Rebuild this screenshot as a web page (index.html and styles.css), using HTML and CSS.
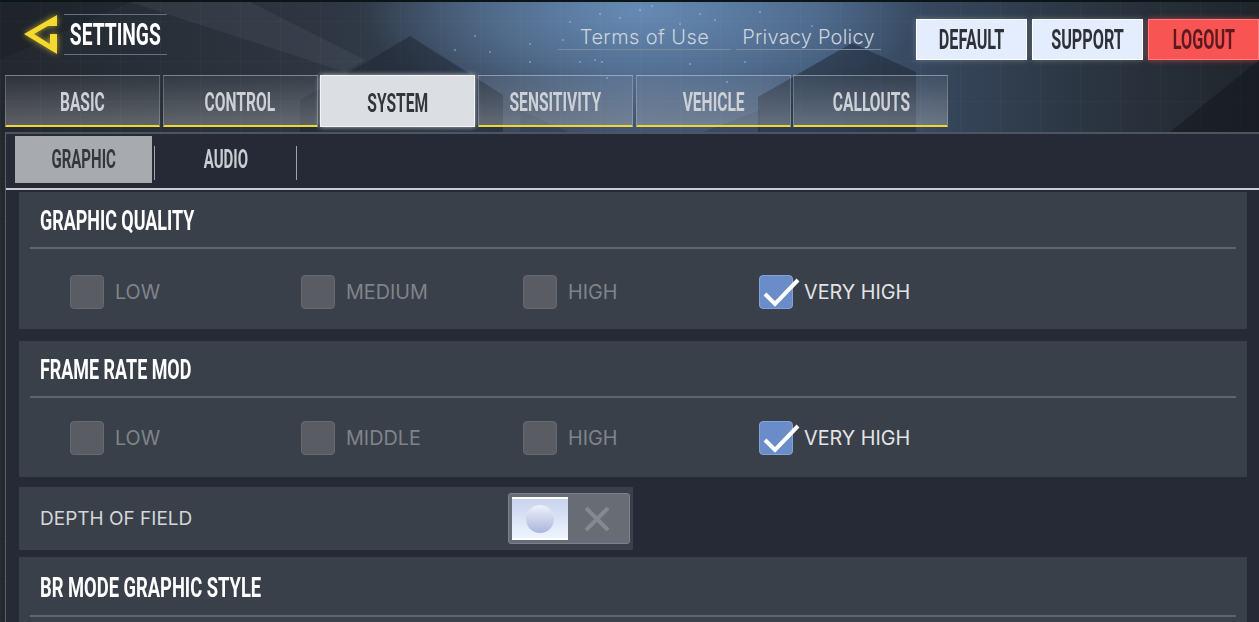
FILE: index.html
```html
<!DOCTYPE html>
<html lang="en">
<head>
  <meta charset="UTF-8" />
  <title>Settings</title>
  <link rel="stylesheet" href="styles.css">
</head>
<body>
  <svg class="backdrop" width="1259" height="622" viewBox="0 0 1259 622">
    <polygon points="130,2 250,2 365,60 345,72" fill="#a4b2c4" opacity="0.08"/>
    <polygon points="0,60 130,2 0,2" fill="#0e1218" opacity="0.2"/>
    <polygon points="350,72 410,36 503,95 503,132 300,132 300,100" fill="#1c2430" opacity="0.5"/>
    <polygon points="758,97 852,43 916,72 916,132 758,132" fill="#1c2430" opacity="0.5"/>
    <polygon points="520,110 630,160 760,110 760,132 520,132" fill="#1c2430" opacity="0.22"/>
    <polygon points="1170,132 1259,60 1259,132" fill="#11151c" opacity="0.5"/>
    <g fill="#c5d6ea" opacity="0.45">
      <circle cx="563" cy="40" r="1"/><circle cx="530" cy="44" r="1"/><circle cx="595" cy="60" r="1"/>
      <circle cx="602" cy="62" r="1"/><circle cx="580" cy="62" r="1"/><circle cx="640" cy="10" r="1"/>
      <circle cx="652" cy="6" r="1"/><circle cx="600" cy="14" r="1"/><circle cx="570" cy="22" r="1"/>
      <circle cx="700" cy="14" r="1"/><circle cx="715" cy="20" r="1"/><circle cx="690" cy="64" r="1"/>
      <circle cx="607" cy="78" r="1"/><circle cx="727" cy="82" r="1"/><circle cx="660" cy="30" r="1"/>
      <circle cx="620" cy="18" r="1"/><circle cx="680" cy="24" r="1"/><circle cx="490" cy="52" r="1"/>
      <circle cx="455" cy="50" r="1"/><circle cx="530" cy="62" r="1"/><circle cx="760" cy="12" r="1"/>
      <circle cx="745" cy="62" r="1"/><circle cx="812" cy="26" r="1"/><circle cx="475" cy="36" r="1"/>
    </g>
  </svg>

  <div class="page">
    <header class="topbar">
      <svg class="back-icon" width="36" height="42" viewBox="0 0 36 42">
        <path d="M34 2 L1 21 L34 41 L34 21 L27 21 L27 31 L11 21 L25 13 L34 13 Z" fill="#f5d92e"/>
      </svg>
      <div class="title-box"><span class="squeeze title">SETTINGS</span></div>
      <nav class="links">
        <a class="link link-terms">Terms of Use</a>
        <a class="link link-privacy">Privacy Policy</a>
      </nav>
      <div class="actions">
        <button class="action"><span class="squeeze">DEFAULT</span></button>
        <button class="action"><span class="squeeze">SUPPORT</span></button>
        <button class="action action-red"><span class="squeeze">LOGOUT</span></button>
      </div>
    </header>

    <div class="tabs">
      <div class="tab"><span class="squeeze">BASIC</span></div>
      <div class="tab"><span class="squeeze">CONTROL</span></div>
      <div class="tab active"><span class="squeeze">SYSTEM</span></div>
      <div class="tab"><span class="squeeze">SENSITIVITY</span></div>
      <div class="tab"><span class="squeeze">VEHICLE</span></div>
      <div class="tab"><span class="squeeze">CALLOUTS</span></div>
    </div>

    <main class="content">
      <div class="subtabs">
        <div class="subtab active"><span class="squeeze">GRAPHIC</span></div>
        <div class="subtab"><span class="squeeze">AUDIO</span></div>
      </div>

      <section class="panel panel-quality">
        <h2 class="panel-head"><span class="squeeze">GRAPHIC QUALITY</span></h2>
        <div class="options">
          <div class="option"><i class="box"></i>LOW</div>
          <div class="option"><i class="box"></i>MEDIUM</div>
          <div class="option"><i class="box"></i>HIGH</div>
          <div class="option on">
            <i class="box"><svg class="check" width="38" height="30" viewBox="0 0 38 30"><path d="M3 17 L13 27 L36 3" fill="none" stroke="#fff" stroke-width="4"/></svg></i>VERY HIGH
          </div>
        </div>
      </section>

      <section class="panel panel-frame">
        <h2 class="panel-head"><span class="squeeze">FRAME RATE MOD</span></h2>
        <div class="options">
          <div class="option"><i class="box"></i>LOW</div>
          <div class="option"><i class="box"></i>MIDDLE</div>
          <div class="option"><i class="box"></i>HIGH</div>
          <div class="option on">
            <i class="box"><svg class="check" width="38" height="30" viewBox="0 0 38 30"><path d="M3 17 L13 27 L36 3" fill="none" stroke="#fff" stroke-width="4"/></svg></i>VERY HIGH
          </div>
        </div>
      </section>

      <section class="row-depth">
        <span class="depth-label">DEPTH OF FIELD</span>
        <div class="toggle">
          <div class="toggle-on"><i class="knob"></i></div>
          <div class="toggle-off">
            <svg width="28" height="28" viewBox="0 0 28 28"><path d="M3 3 L25 25 M25 3 L3 25" stroke="#858991" stroke-width="4"/></svg>
          </div>
        </div>
      </section>

      <section class="panel panel-style">
        <h2 class="panel-head"><span class="squeeze">BR MODE GRAPHIC STYLE</span></h2>
      </section>
    </main>
  </div>
</body>
</html>
```

FILE: styles.css
```css
* {
  box-sizing: border-box;
}
html, body {
  margin: 0;
  height: 622px;
  overflow: hidden;
}
body {
  position: relative;
  font-family: 'Inter', sans-serif;
  color: #fff;
  background:
    repeating-linear-gradient(90deg, rgba(255,255,255,0.025) 0 1px, transparent 1px 40px),
    repeating-linear-gradient(0deg, rgba(255,255,255,0.02) 0 1px, transparent 1px 40px),
    radial-gradient(ellipse 280px 110px at 640px 10px, #668ab4 0%, rgba(102,138,180,0.5) 55%, rgba(102,138,180,0) 100%),
    linear-gradient(90deg, #23282f 0%, #2e3743 27%, #425672 50%, #3f5572 65%, #2c3744 85%, #20252b 100%);
}
.backdrop {
  position: absolute;
  left: 0;
  top: 0;
}
.page {
  position: relative;
  height: 622px;
  border-top: 2px solid #0b1518;
}
.squeeze {
  display: inline-block;
  font-family: 'Roboto', sans-serif;
  font-weight: 700;
  transform: scaleX(0.6);
  white-space: nowrap;
}

/* top bar */
.topbar {
  height: 73px;
  display: flex;
  align-items: flex-start;
  padding-left: 23px;
}
.back-icon {
  margin-top: 11px;
  filter: drop-shadow(0 0 3px rgba(245,217,46,0.7));
}
.title-box {
  width: 103px;
  height: 41px;
  margin: 12px 0 0 5px;
  border-top: 1px solid #667080;
  border-bottom: 1px solid #667080;
  display: flex;
  align-items: center;
  justify-content: center;
}
.title {
  font-size: 31px;
  line-height: 1;
  transform: scaleX(0.62);
}
.links {
  display: flex;
  gap: 5px;
  margin: 20px 0 0 391px;
}
.link {
  height: 28px;
  border-bottom: 1px solid #7d8a9b;
  color: #cbd4dd;
  font-size: 20px;
  font-weight: 300;
  line-height: 30px;
  letter-spacing: 0.4px;
  text-align: center;
}
.link-terms {
  width: 173px;
  padding-left: 0;
}
.link-privacy {
  width: 145px;
  letter-spacing: 0.2px;
}
.actions {
  display: flex;
  gap: 5px;
  margin: 17px 0 0 35px;
}
.action {
  width: 111px;
  height: 41px;
  padding: 0;
  display: flex;
  align-items: center;
  justify-content: center;
  border: 1px solid #fff;
  background: #e4edfd;
  color: #2e3238;
  font-size: 27px;
  box-shadow: 0 0 6px rgba(255,255,255,0.25);
}
.action-red {
  border-color: #ff7d7d;
  background: #f95454;
  color: #5c1a1e;
  box-shadow: 0 0 6px rgba(249,84,84,0.6);
}

/* main tabs */
.tabs {
  display: flex;
  gap: 2.7px;
  height: 52px;
  padding-left: 5px;
}
.tab {
  width: 155px;
  padding-top: 3px;
  display: flex;
  align-items: center;
  justify-content: center;
  border: 1px solid rgba(255,255,255,0.2);
  border-bottom: 2px solid #efd72f;
  background: linear-gradient(180deg, rgba(255,255,255,0.05), rgba(255,255,255,0.26));
  color: #cdd1d6;
  font-size: 26px;
}
.tab.active {
  border: 1px solid #f4f5f6;
  background: #dbdee2;
  color: #33373d;
  box-shadow: 0 0 5px rgba(255,255,255,0.7);
}

/* content */
.content {
  height: 490px;
  margin: 5px 0 0 5px;
  border-top: 2px solid #4f5560;
  border-left: 1px solid #596070;
  background: #252a36;
}
.subtabs {
  display: flex;
  height: 56px;
  padding: 2px 0 0 9px;
  border-bottom: 2px solid #c9cdd2;
}
.subtab {
  width: 137px;
  height: 47px;
  display: flex;
  align-items: center;
  justify-content: center;
  color: #c9cdd2;
  font-size: 25px;
  position: relative;
}
.subtab.active {
  background: #a7aaae;
  color: #34373d;
}
.subtab + .subtab {
  width: 143px;
  margin-left: 2px;
  padding-bottom: 8px;
  border-left: 1px solid #9ea3ab;
  border-right: 1px solid #9ea3ab;
  height: 34px;
  margin-top: 10px;
}
.panel {
  width: 1228px;
  margin-left: 13px;
  padding: 0 11px;
  background: #3a4049;
}
.panel-quality {
  height: 137px;
  margin-top: 2px;
}
.panel-frame {
  height: 136px;
  margin-top: 12px;
}
.panel-style {
  height: 80px;
  margin-top: 7px;
}
.panel-head {
  height: 57px;
  margin: 0;
  padding: 2px 0 0 10px;
  border-bottom: 2px solid #5f646d;
  display: flex;
  align-items: center;
  font-size: 28px;
  font-weight: 400;
}
.panel-head .squeeze {
  transform: scaleX(0.64);
  transform-origin: left center;
}
.panel-style .panel-head {
  height: 60px;
  padding-top: 2px;
}
.panel-style .panel-head .squeeze {
  transform: scaleX(0.655);
}
.options {
  display: grid;
  grid-template-columns: 231px 222px 236px auto;
  align-items: center;
  padding: 26px 0 0 40px;
}
.panel-frame .options {
  padding-top: 23px;
}
.option {
  display: flex;
  align-items: center;
  gap: 11px;
  height: 34px;
  color: #7f848b;
  font-size: 19.8px;
}
.option.on {
  color: #e2e4e7;
}
.box {
  position: relative;
  width: 34px;
  height: 34px;
  border: 1px solid #656a72;
  border-radius: 4px;
  background: #595c62;
}
.option.on .box {
  border-color: #82a2da;
  background: #6a8cc8;
}
.check {
  position: absolute;
  left: 2px;
  top: 1px;
}
.row-depth {
  width: 614px;
  height: 63px;
  margin: 10px 0 0 13px;
  padding-left: 21px;
  background: #3a4049;
  display: flex;
  align-items: center;
  justify-content: space-between;
}
.depth-label {
  color: #d4d7da;
  font-size: 19px;
}
.toggle {
  width: 122px;
  height: 51px;
  margin-right: 3px;
  padding: 3px 3px 3px;
  display: flex;
  border: 1px solid #7a8292;
  border-radius: 3px;
  background: #686c74;
}
.toggle-on {
  width: 56px;
  height: 43px;
  display: flex;
  align-items: center;
  justify-content: center;
  border-top: 2px solid #fff;
  border-bottom: 2px solid #fff;
  background: linear-gradient(180deg, #c8d3ec, #eef4ff);
}
.knob {
  width: 28px;
  height: 28px;
  border-radius: 50%;
  background: linear-gradient(180deg, #eef2fb, #aab6dc);
}
.toggle-off {
  flex: 1;
  display: flex;
  align-items: center;
  justify-content: center;
}
```
